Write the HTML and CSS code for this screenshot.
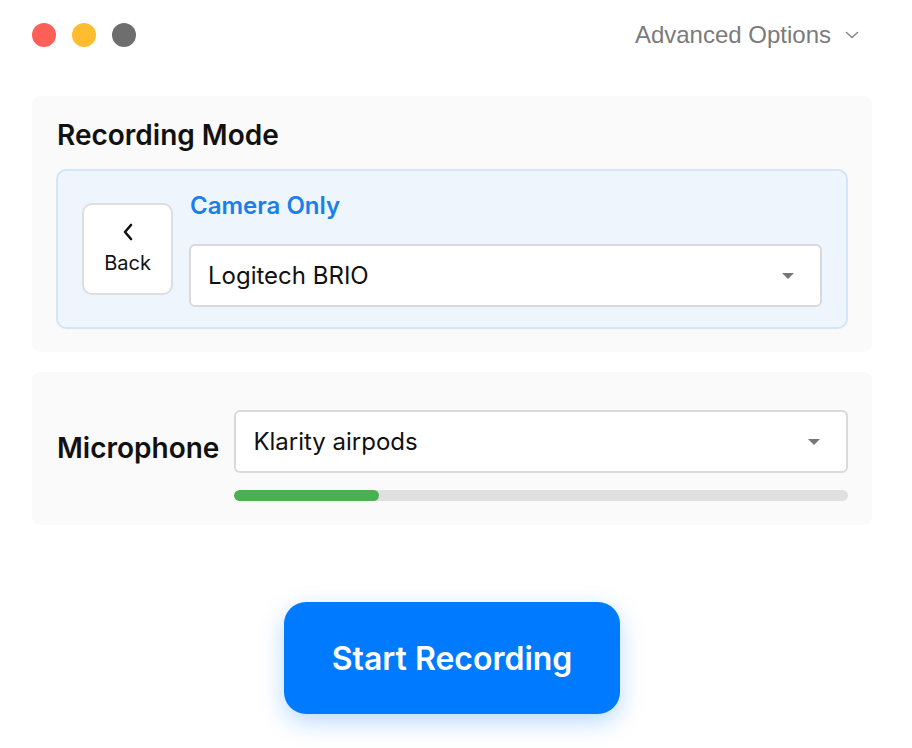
FILE: index.html
```html
<!DOCTYPE html>
<html lang="en">
<head>
    <meta charset="UTF-8">
    <meta name="viewport" content="width=device-width, initial-scale=1.0">
    <title>Recorder</title>
    <link rel="stylesheet" href="styles.css">
</head>
<body>
    <div class="window">
        <div class="titlebar">
            <div class="lights">
                <span class="light red"></span>
                <span class="light yellow"></span>
                <span class="light gray"></span>
            </div>
            <div class="advanced">
                Advanced Options
                <svg width="14" height="8" viewBox="0 0 14 8"><path d="M1.5 1.5 L7 6.5 L12.5 1.5" fill="none" stroke="#8a8a8a" stroke-width="1.6" stroke-linecap="round" stroke-linejoin="round"/></svg>
            </div>
        </div>

        <div class="panel mode-panel">
            <h2>Recording Mode</h2>
            <div class="mode-box">
                <button class="back">
                    <svg width="12" height="18" viewBox="0 0 12 18"><path d="M9 2 L3 9 L9 16" fill="none" stroke="#111" stroke-width="2.6" stroke-linecap="round" stroke-linejoin="round"/></svg>
                    <span>Back</span>
                </button>
                <div class="mode-main">
                    <div class="mode-title">Camera Only</div>
                    <div class="select">
                        <span>Logitech BRIO</span>
                        <span class="caret"></span>
                    </div>
                </div>
            </div>
        </div>

        <div class="panel mic-panel">
            <div class="mic-label">Microphone</div>
            <div class="mic-main">
                <div class="select">
                    <span>Klarity airpods</span>
                    <span class="caret"></span>
                </div>
                <div class="level"><div class="level-fill" style="width: 23.5%"></div></div>
            </div>
        </div>

        <div class="actions">
            <button class="start">Start Recording</button>
        </div>
    </div>
</body>
</html>
```

FILE: styles.css
```css
body {
    margin: 0;
    padding: 0;
    background: #ffffff;
    font-family: Inter, "Noto Sans", sans-serif;
    color: #111;
}
.window {
    padding: 0 40px 34px 32px;
}
.titlebar {
    display: flex;
    align-items: center;
    justify-content: space-between;
    height: 70px;
}
.lights {
    display: flex;
    gap: 16px;
}
.light {
    width: 24px;
    height: 24px;
    border-radius: 50%;
}
.red { background: #fe5f57; }
.yellow { background: #febc2e; }
.gray { background: #6e6e6e; }
.advanced {
    display: flex;
    align-items: center;
    gap: 14px;
    font-family: "Liberation Sans", Arial, sans-serif;
    font-size: 24px;
    color: #7a7a7a;
    margin-right: 13px;
}
.panel {
    background: #fafafa;
    border-radius: 8px;
}
.mode-panel {
    margin-top: 26px;
    padding: 22px 24px 23px 24px;
}
.mode-panel h2 {
    margin: 0 0 17px 1px;
    font-size: 28px;
    font-weight: 600;
    line-height: 34px;
}
.mode-box {
    display: flex;
    align-items: center;
    gap: 16px;
    background: #eef5fd;
    border: 2px solid #d3e5f7;
    border-radius: 10px;
    padding: 20px 24px;
}
.back {
    display: flex;
    flex-direction: column;
    align-items: center;
    justify-content: center;
    gap: 10px;
    width: 91px;
    height: 92px;
    background: #fff;
    border: 2px solid #dedede;
    border-radius: 10px;
    font-family: Inter, sans-serif;
    font-size: 20px;
    color: #111;
    padding: 0;
}
.mode-main {
    flex: 1;
}
.mode-title {
    color: #1a7fe8;
    font-size: 24px;
    font-weight: 600;
    line-height: 29px;
    margin: 0 0 24px 1px;
}
.select {
    display: flex;
    align-items: center;
    justify-content: space-between;
    height: 59px;
    background: #fff;
    border: 2px solid #d9d9d9;
    border-radius: 6px;
    padding: 0 26px 0 17px;
    font-size: 24px;
    color: #111;
}
.caret {
    width: 0;
    height: 0;
    border-left: 6px solid transparent;
    border-right: 6px solid transparent;
    border-top: 6px solid #777;
}
.mic-panel {
    margin-top: 20px;
    display: flex;
    align-items: center;
    gap: 15px;
    padding: 38px 24px 24px 25px;
}
.mic-label {
    font-size: 28px;
    font-weight: 600;
    line-height: 34px;
    margin-bottom: 15px;
}
.mic-main {
    flex: 1;
}
.level {
    margin-top: 17px;
    height: 11px;
    background: #e0e0e0;
    border-radius: 6px;
    overflow: hidden;
}
.level-fill {
    height: 100%;
    background: #4caf50;
    border-radius: 6px;
}
.actions {
    display: flex;
    justify-content: center;
    margin-top: 77px;
}
.start {
    width: 336px;
    height: 112px;
    background: #007bff;
    color: #fff;
    border: none;
    border-radius: 22px;
    font-family: Inter, sans-serif;
    font-size: 32px;
    font-weight: 600;
    box-shadow: 0 8px 24px rgba(0, 123, 255, 0.28);
}
```
